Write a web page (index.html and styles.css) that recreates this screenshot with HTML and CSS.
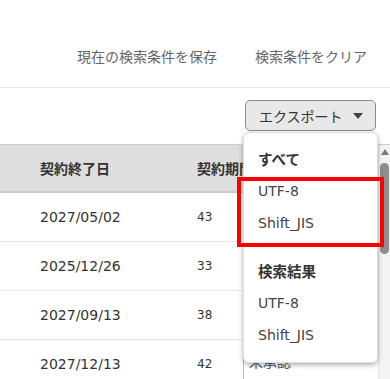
FILE: index.html
```html
<!DOCTYPE html>
<html lang="ja">
<head>
<meta charset="utf-8">
<link rel="stylesheet" href="styles.css">
</head>
<body>
<div class="toolbar">
  <a class="tool-link">現在の検索条件を保存</a>
  <a class="tool-link">検索条件をクリア</a>
</div>
<div class="actions">
  <button class="export-btn">エクスポート<span class="caret"></span></button>
  <div class="menu">
    <div class="menu-head">すべて</div>
    <div class="menu-item">UTF-8</div>
    <div class="menu-item">Shift_JIS</div>
    <div class="menu-sep"></div>
    <div class="menu-head">検索結果</div>
    <div class="menu-item">UTF-8</div>
    <div class="menu-item">Shift_JIS</div>
  </div>
  <div class="highlight"></div>
</div>
<div class="table-wrap">
  <div class="table">
    <div class="row head">
      <div class="cell c1">契約終了日</div>
      <div class="cell c2">契約期間</div>
      <div class="cell c3">状態</div>
    </div>
    <div class="row">
      <div class="cell c1">2027/05/02</div>
      <div class="cell c2 num">43</div>
      <div class="cell c3">承認済</div>
    </div>
    <div class="row">
      <div class="cell c1">2025/12/26</div>
      <div class="cell c2 num">33</div>
      <div class="cell c3">承認済</div>
    </div>
    <div class="row">
      <div class="cell c1">2027/09/13</div>
      <div class="cell c2 num">38</div>
      <div class="cell c3">承認済</div>
    </div>
    <div class="row">
      <div class="cell c1">2027/12/13</div>
      <div class="cell c2 num">42</div>
      <div class="cell c3 low">未承認</div>
    </div>
  </div>
  <div class="scrollbar">
    <span class="sb-arrow"></span>
    <span class="sb-thumb"></span>
  </div>
</div>
</body>
</html>
```
FILE: styles.css
```css
* { box-sizing: border-box; }
html, body { margin: 0; padding: 0; background: #fff; }
body {
  font-family: "DejaVu Sans", "Noto Sans CJK JP", sans-serif;
  font-size: 14px;
  color: #333;
  width: 390px;
  height: 379px;
  overflow: hidden;
}
.toolbar {
  height: 88px;
  border-bottom: 1px solid #e6e6e6;
  display: flex;
  justify-content: flex-end;
  align-items: flex-end;
  gap: 38px;
  padding: 0 23px 21px 0;
}
.tool-link {
  font-family: "Noto Sans CJK JP", sans-serif;
  font-size: 14px;
  line-height: 20px;
  color: #666;
}
.actions {
  position: relative;
  height: 56px;
  display: flex;
  justify-content: flex-end;
  align-items: flex-start;
  padding: 12px 14px 0 0;
}
.export-btn {
  width: 131px;
  height: 31px;
  border: 1px solid #8a8a8a;
  border-radius: 5px;
  background: #e8e8e8;
  font-family: "Noto Sans CJK JP", sans-serif;
  font-size: 14px;
  color: #333;
  display: flex;
  align-items: center;
  padding: 0 0 0 13px;
  gap: 10px;
}
.caret {
  width: 0;
  height: 0;
  border-left: 5px solid transparent;
  border-right: 5px solid transparent;
  border-top: 6px solid #444;
  margin-top: 1px;
}
.menu {
  position: absolute;
  left: 243px;
  top: 44px;
  width: 135px;
  height: 231px;
  background: #fff;
  border: 1px solid #ddd;
  border-radius: 6px;
  box-shadow: 0 2px 5px rgba(0,0,0,0.3);
  padding: 10px 0 0 0;
  z-index: 5;
}
.menu-head, .menu-item {
  height: 32px;
  line-height: 32px;
  padding-left: 14px;
  color: #333;
}
.menu-head {
  font-family: "Noto Sans CJK JP", sans-serif;
  font-weight: bold;
  font-size: 14.5px;
}
.menu-item { color: #444; }
.menu-sep { height: 16px; }
.highlight {
  position: absolute;
  left: 237px;
  top: 89px;
  width: 147px;
  height: 70px;
  border: 4px solid #f00;
  z-index: 6;
}
.table-wrap {
  display: grid;
  grid-template-columns: 378px 12px;
  border-top: 1px solid #cfcfcf;
}
.row {
  display: grid;
  grid-template-columns: 197px 46px 1fr;
  height: 49px;
  border-bottom: 1px solid #e6e6e6;
  align-items: center;
}
.row.head {
  height: 48px;
  background: #dedede;
  border-bottom: 2px solid #cbcbcb;
  font-family: "Noto Sans CJK JP", sans-serif;
  font-weight: bold;
  color: #333;
}
.cell { white-space: nowrap; overflow: hidden; }
.c1 { padding-left: 40px; }
.c3 {
  align-self: stretch;
  border-left: 1px solid #bdbdbd;
  padding: 14px 0 0 5px;
  font-family: "Noto Sans CJK JP", sans-serif;
  color: #555;
}
.head .c3 { border-left: none; }
.num { font-size: 12px; }
.low { padding-top: 11px; }
.scrollbar {
  position: relative;
  background: #f4f4f4;
  border-left: 1px solid #e4e4e4;
}
.sb-arrow {
  position: absolute;
  left: 2px;
  top: 4px;
  width: 0;
  height: 0;
  border-left: 4px solid transparent;
  border-right: 4px solid transparent;
  border-bottom: 6px solid #777;
}
.sb-thumb {
  position: absolute;
  left: 1px;
  top: 18px;
  width: 9px;
  height: 91px;
  border-radius: 5px;
  background: #8d8d8d;
}
```
